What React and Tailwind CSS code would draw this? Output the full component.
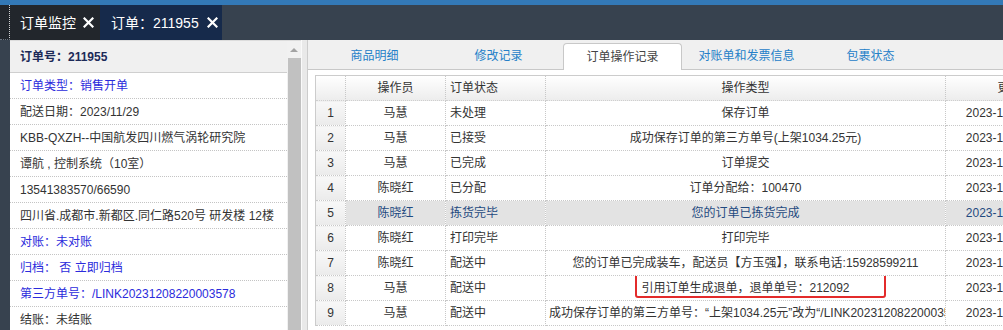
import React from 'react';

const FONT = "font-['Liberation_Sans','Noto_Sans_CJK_SC',sans-serif]";

const INFO = [
  { text: '订单类型：销售开单', blue: true },
  { text: '配送日期：2023/11/29' },
  { text: 'KBB-QXZH--中国航发四川燃气涡轮研究院' },
  { text: '谭航 , 控制系统（10室）' },
  { text: '13541383570/66590' },
  { text: '四川省.成都市.新都区.同仁路520号 研发楼 12楼' },
  { text: '对账：未对账', blue: true },
  { text: '归档： 否 立即归档', blue: true },
  { text: '第三方单号：/LINK20231208220003578', blue: true },
  { text: '结账：未结账' },
];

const TABS = ['商品明细', '修改记录', '订单操作记录', '对账单和发票信息', '包裹状态'];

const ROWS = [
  ['马慧', '未处理', '保存订单', '2023-12-01 09:12:36'],
  ['马慧', '已接受', '成功保存订单的第三方单号(上架1034.25元)', '2023-12-01 09:13:02'],
  ['马慧', '已完成', '订单提交', '2023-12-01 09:13:18'],
  ['陈晓红', '已分配', '订单分配给：100470', '2023-12-01 10:25:41'],
  ['陈晓红', '拣货完毕', '您的订单已拣货完成', '2023-12-01 14:06:55'],
  ['陈晓红', '打印完毕', '打印完毕', '2023-12-01 14:07:12'],
  ['陈晓红', '配送中', '您的订单已完成装车，配送员【方玉强】，联系电话:15928599211', '2023-12-02 08:31:09'],
  ['马慧', '配送中', '引用订单生成退单，退单单号：212092', '2023-12-08 16:42:27'],
  ['马慧', '配送中', '成功保存订单的第三方单号：“上架1034.25元”改为“/LINK20231208220003578”', '2023-12-08 22:00:04'],
];

function CloseMark() {
  return (
    <svg width="11" height="11" viewBox="0 0 11 11" className="shrink-0">
      <path d="M1.5 1.5 L9.5 9.5 M9.5 1.5 L1.5 9.5" stroke="white" strokeWidth="2.2" strokeLinecap="square" />
    </svg>
  );
}

export default function App() {
  return (
    <div className={`${FONT} h-[330px] w-[1003px] overflow-hidden bg-[#37424f] text-[12px] text-[#333]`}>
      <div className="h-[5px] bg-[#3379b7]" />

      {/* page tabs */}
      <div className="flex h-[35px] bg-[#37424f] text-[14px] text-white">
        <div className="w-[10px] border-r border-b border-dotted border-r-white/80 border-b-[#6b7480] bg-[#22262c]" />
        <div className="flex w-[90px] items-center gap-[7px] bg-[#22262c] pl-[10px]">
          <span className="leading-5">订单监控</span>
          <CloseMark />
        </div>
        <div className="flex w-[122px] items-center gap-[8px] bg-[#162a4b] pl-[11px]">
          <span className="leading-5">订单：211955</span>
          <CloseMark />
        </div>
      </div>

      <div className="flex h-[290px]">
        <div className="w-[10px] bg-[#37424f]" />

        {/* order summary */}
        <div className="w-[277px] overflow-hidden border-t border-[#dcdcdc] bg-white">
          <div className="flex h-[32px] items-center border-b border-[#cfcfcf] bg-[#f0f0f0] px-[10px] font-bold text-[#1c2a58]">
            订单号：211955
          </div>
          {INFO.map((item) => (
            <div
              key={item.text}
              className={`flex h-[26px] items-center whitespace-nowrap border-b border-dotted border-[#c4c4c4] px-[10px] leading-4 ${
                item.blue ? 'text-[#2b2bdc]' : 'text-[#333]'
              }`}
            >
              {item.text}
            </div>
          ))}
        </div>

        {/* scrollbar */}
        <div className="flex w-[14px] flex-col border-t border-[#dcdcdc] bg-[#f1f1f1]">
          <div className="flex h-[17px] items-center justify-center">
            <div className="h-0 w-0 border-x-[4px] border-b-[4px] border-x-transparent border-b-[#a3a3a3]" />
          </div>
          <div className="ml-[1px] flex-1 bg-[#c1c1c1]" />
        </div>
        <div className="w-[6px] border-l border-[#fafafa] bg-[#e9e9e9]" />

        {/* detail panel */}
        <div className="flex-1 overflow-hidden border-l border-[#cccccc] bg-white">
          <div className="flex h-[30px] items-end gap-[5px] border-b border-[#c8c8c8] bg-[#f0f0f0] pl-[7px]">
            {TABS.map((tab, i) =>
              i === 2 ? (
                <div
                  key={tab}
                  className="-mb-px flex h-[27px] w-[119px] items-center justify-center rounded-t-[4px] border border-b-0 border-[#c8c8c8] bg-white text-[#444]"
                >
                  {tab}
                </div>
              ) : (
                <div key={tab} className="flex h-[27px] w-[119px] items-center justify-center text-[#2580c8]">
                  {tab}
                </div>
              )
            )}
          </div>

          <div className="pl-[7px] pt-[5px]">
            <table className="w-[1100px] table-fixed border-collapse border-l border-t border-[#cccccc]">
              <colgroup>
                <col className="w-[30px]" />
                <col className="w-[100px]" />
                <col className="w-[100px]" />
                <col className="w-[400px]" />
                <col className="w-[152px]" />
                <col />
              </colgroup>
              <thead>
                <tr className="h-[25px] bg-linear-to-b from-white to-[#ececec]">
                  <th className="border-b border-r border-b-[#cfcfcf] border-r-[#c8c8c8] border-dotted font-normal" />
                  <th className="border-b border-r border-b-[#cfcfcf] border-r-[#c8c8c8] border-dotted font-normal">操作员</th>
                  <th className="border-b border-r border-b-[#cfcfcf] border-r-[#c8c8c8] border-dotted px-1 text-left font-normal">订单状态</th>
                  <th className="border-b border-r border-b-[#cfcfcf] border-r-[#c8c8c8] border-dotted font-normal">操作类型</th>
                  <th className="border-b border-r border-b-[#cfcfcf] border-r-[#c8c8c8] border-dotted font-normal">更新时间</th>
                  <th className="border-b border-b-[#cfcfcf] border-dotted font-normal">备注</th>
                </tr>
              </thead>
              <tbody>
                {ROWS.map((row, i) => {
                  const selected = i === 4;
                  const cell = `h-[25px] overflow-hidden whitespace-nowrap border-b border-r border-dotted border-[#c8c8c8] leading-4 ${
                    selected ? 'text-[#1f4a80]' : ''
                  }`;
                  return (
                    <tr key={i} className={selected ? 'bg-[#e3e3e3]' : 'bg-white'}>
                      <td className={`${cell} bg-linear-to-b from-[#f8f8f8] to-[#ebebeb] text-center text-[#333]`}>{i + 1}</td>
                      <td className={`${cell} text-center`}>{row[0]}</td>
                      <td className={`${cell} px-1`}>{row[1]}</td>
                      <td className={`${cell} px-[3px] text-center`}>
                        {i === 7 ? (
                          <span className="relative inline-block">
                            {row[2]}
                            <span className="absolute -top-[7px] -bottom-[2px] -left-[6px] -right-[36px] rounded-[3px] border-2 border-[#e32b2b]" />
                          </span>
                        ) : (
                          row[2]
                        )}
                      </td>
                      <td className={`${cell} text-center`}>{row[3]}</td>
                      <td className={cell} />
                    </tr>
                  );
                })}
              </tbody>
            </table>
          </div>
        </div>
      </div>
    </div>
  );
}
